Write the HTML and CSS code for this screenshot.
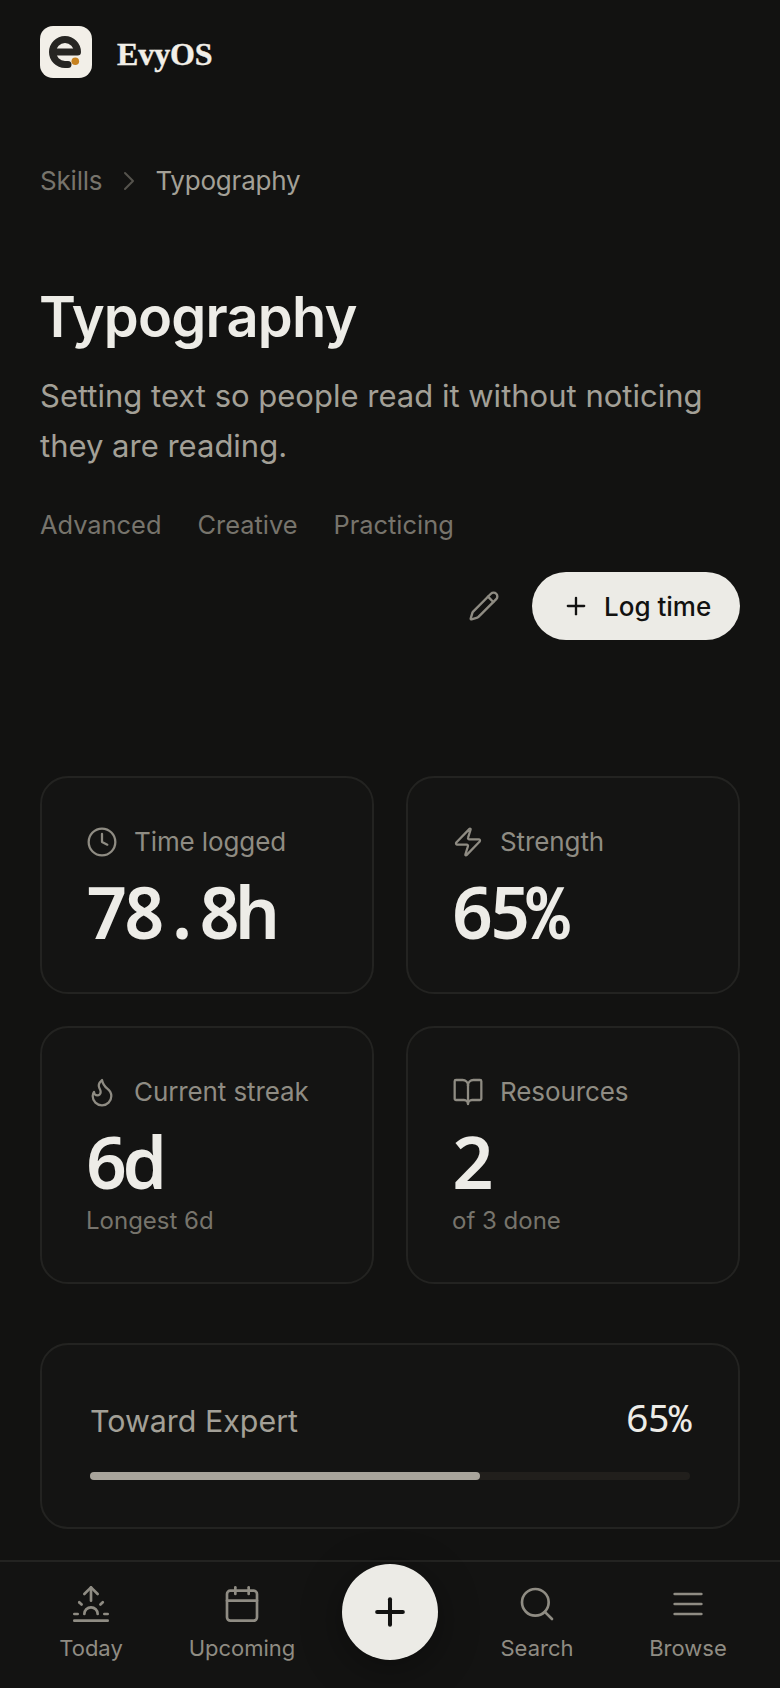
FILE: index.html
```html
<!DOCTYPE html>
<html lang="en">
<head>
    <meta charset="UTF-8">
    <meta name="viewport" content="width=device-width, initial-scale=1.0">
    <title>Typography - EvyOS</title>
    <link rel="stylesheet" href="styles.css">
</head>
<body>
    <div class="app">
        <main class="content">
            <header class="brand">
                <svg class="brand-logo" viewBox="0 0 52 52" aria-hidden="true">
                    <rect width="52" height="52" rx="13" fill="#f2efe8"/>
                    <path d="M12.500 26H37.500a12.500 12.500 0 1 0-12.500 12.500h3" fill="none" stroke="#262522" stroke-width="7" stroke-linecap="round"/>
                    <circle cx="35.300" cy="35.300" r="3.800" fill="#c7821f"/>
                </svg>
                <span class="brand-name">EvyOS</span>
            </header>

            <nav class="crumbs">
                <span class="crumb">Skills</span>
                <svg class="crumb-sep" viewBox="0 0 24 24"><path d="m9 18 6-6-6-6"/></svg>
                <span class="crumb-current">Typography</span>
            </nav>

            <h1 class="title">Typography</h1>
            <p class="subtitle">Setting text so people read it without noticing they are reading.</p>

            <div class="tags">
                <span>Advanced</span>
                <span>Creative</span>
                <span>Practicing</span>
            </div>

            <div class="actions">
                <button class="edit-btn" aria-label="Edit">
                    <svg viewBox="0 0 24 24"><path d="M21.174 6.812a1 1 0 0 0-3.986-3.987L3.842 16.174a2 2 0 0 0-.5.83l-1.321 4.352a.5.5 0 0 0 .623.622l4.353-1.32a2 2 0 0 0 .83-.497z"/><path d="m15 5 4 4"/></svg>
                </button>
                <button class="log-btn">
                    <svg viewBox="0 0 24 24"><path d="M5 12h14"/><path d="M12 5v14"/></svg>
                    Log time
                </button>
            </div>

            <section class="stats">
                <div class="stat">
                    <div class="stat-label">
                        <svg viewBox="0 0 24 24"><circle cx="12" cy="12" r="10"/><path d="M12 6v6l4 2"/></svg>
                        Time logged
                    </div>
                    <div class="stat-value">78.8h</div>
                </div>
                <div class="stat">
                    <div class="stat-label">
                        <svg viewBox="0 0 24 24"><path d="M4 14a1 1 0 0 1-.78-1.630l9.900-10.200a.5.5 0 0 1 .86.460l-1.920 6.020A1 1 0 0 0 13 10h7a1 1 0 0 1 .78 1.630l-9.900 10.200a.5.5 0 0 1-.86-.460l1.920-6.020A1 1 0 0 0 11 14z"/></svg>
                        Strength
                    </div>
                    <div class="stat-value">65%</div>
                </div>
                <div class="stat">
                    <div class="stat-label">
                        <svg viewBox="0 0 24 24"><path d="M8.500 14.500A2.500 2.500 0 0 0 11 12c0-1.380-.5-2-1-3-1.072-2.143-.224-4.054 2-6 .5 2.500 2 4.900 4 6.500 2 1.600 3 3.500 3 5.500a7 7 0 1 1-14 0c0-1.153.433-2.294 1-3a2.500 2.500 0 0 0 2.500 2.500z"/></svg>
                        Current streak
                    </div>
                    <div class="stat-value">6d</div>
                    <div class="stat-sub">Longest 6d</div>
                </div>
                <div class="stat">
                    <div class="stat-label">
                        <svg viewBox="0 0 24 24"><path d="M12 7v14"/><path d="M3 18a1 1 0 0 1-1-1V4a1 1 0 0 1 1-1h5a4 4 0 0 1 4 4 4 4 0 0 1 4-4h5a1 1 0 0 1 1 1v13a1 1 0 0 1-1 1h-6a3 3 0 0 0-3 3 3 3 0 0 0-3-3z"/></svg>
                        Resources
                    </div>
                    <div class="stat-value">2</div>
                    <div class="stat-sub">of 3 done</div>
                </div>
            </section>

            <section class="progress-card">
                <div class="progress-head">
                    <span class="progress-title">Toward Expert</span>
                    <span class="progress-value">65%</span>
                </div>
                <div class="progress-track">
                    <div class="progress-fill" style="width: 65%"></div>
                </div>
            </section>
        </main>

        <nav class="tabbar">
            <a class="tab">
                <svg viewBox="0 0 24 24"><path d="M12 2v8"/><path d="m4.930 10.930 1.410 1.410"/><path d="M2 18h2"/><path d="M20 18h2"/><path d="m19.070 10.930-1.410 1.410"/><path d="M22 22H2"/><path d="m8 6 4-4 4 4"/><path d="M16 18a4 4 0 0 0-8 0"/></svg>
                Today
            </a>
            <a class="tab">
                <svg viewBox="0 0 24 24"><path d="M8 2v4"/><path d="M16 2v4"/><rect x="3" y="4" width="18" height="18" rx="2"/><path d="M3 10h18"/></svg>
                Upcoming
            </a>
            <button class="fab" aria-label="Add">
                <svg viewBox="0 0 24 24"><path d="M5 12h14"/><path d="M12 5v14"/></svg>
            </button>
            <a class="tab">
                <svg viewBox="0 0 24 24"><circle cx="11" cy="11" r="8"/><path d="m21 21-4.300-4.300"/></svg>
                Search
            </a>
            <a class="tab">
                <svg viewBox="0 0 24 24"><path d="M4 12h16"/><path d="M4 6h16"/><path d="M4 18h16"/></svg>
                Browse
            </a>
        </nav>
    </div>
</body>
</html>
```

FILE: styles.css
```css
* {
    box-sizing: border-box;
}
html, body {
    margin: 0;
    height: 100%;
}
body {
    background-color: #121211;
    color: #edece7;
    font-family: Inter, "Noto Sans", sans-serif;
}
svg {
    fill: none;
    stroke: currentColor;
    stroke-width: 1.5;
    stroke-linecap: round;
    stroke-linejoin: round;
    flex-shrink: 0;
}
button {
    font-family: inherit;
    border: none;
    cursor: pointer;
}
.app {
    height: 1688px;
    display: flex;
    flex-direction: column;
    overflow: hidden;
}
.content {
    flex: 1;
    min-height: 0;
    padding: 26px 40px 0;
}

/* header */
.brand {
    display: flex;
    align-items: center;
    gap: 25px;
}
.brand-logo {
    width: 52px;
    height: 52px;
    stroke: none;
}
.brand-name {
    padding-top: 4px;
    font-family: "Liberation Serif", serif;
    font-weight: 700;
    font-size: 32px;
    letter-spacing: -0.1px;
    color: #f2efe8;
    -webkit-text-stroke: 0.4px #f2efe8;
}
.crumbs {
    display: flex;
    align-items: center;
    gap: 10.500px;
    margin-top: 84px;
    font-size: 26px;
    line-height: 38px;
    letter-spacing: -0.2px;
}
.crumb {
    color: #77746c;
}
.crumb-current {
    color: #a3a097;
}
.crumb-sep {
    width: 32px;
    height: 32px;
    color: #55534d;
}

/* title block */
.title {
    margin: 81px 0 0 -1px;
    font-size: 56px;
    line-height: 72px;
    font-weight: 600;
    letter-spacing: -0.8px;
    color: #edece7;
}
.subtitle {
    margin: 18px 0 0;
    font-size: 31px;
    line-height: 50px;
    color: #a3a097;
}
.tags {
    display: flex;
    gap: 36px;
    margin-top: 35px;
    font-size: 25.400px;
    line-height: 38px;
    color: #77746c;
}
.actions {
    display: flex;
    justify-content: flex-end;
    align-items: center;
    gap: 16px;
    margin-top: 28px;
}
.edit-btn {
    width: 64px;
    height: 68px;
    padding: 0;
    display: flex;
    align-items: center;
    justify-content: center;
    background: none;
    color: #8f8c83;
}
.edit-btn svg {
    width: 32px;
    height: 32px;
    stroke-width: 1.8;
}
.log-btn {
    height: 68px;
    width: 208px;
    padding: 0 0 0 30px;
    display: flex;
    align-items: center;
    gap: 14px;
    border-radius: 34px;
    background-color: #ecebe6;
    color: #121211;
    font-size: 26px;
    font-weight: 500;
    white-space: nowrap;
}
.log-btn svg {
    width: 28px;
    height: 28px;
    stroke-width: 2;
}

/* stat cards */
.stats {
    display: grid;
    grid-template-columns: 1fr 1fr;
    gap: 32px;
    margin-top: 136px;
}
.stat {
    border: 2px solid #232321;
    border-radius: 28px;
    padding: 44px 44px 43px;
    background-color: #141413;
}
.stat-label {
    display: flex;
    align-items: center;
    gap: 16px;
    font-size: 26px;
    line-height: 40px;
    letter-spacing: -0.1px;
    color: #8f8c83;
}
.stat-label svg {
    width: 32px;
    height: 32px;
    stroke-width: 1.7;
}
.stat-value {
    margin: 13px 0 2px -1px;
    font-family: "Noto Sans Mono", "DejaVu Sans Mono", monospace;
    font-weight: 600;
    font-size: 72px;
    line-height: 72px;
    letter-spacing: -5.500px;
    color: #edece7;
}
.stat-sub {
    margin-top: 6px;
    font-size: 24px;
    line-height: 36px;
    color: #77746c;
}

/* progress */
.progress-card {
    margin-top: 59px;
    height: 186px;
    border: 2px solid #232321;
    border-radius: 28px;
    padding: 47px 48px 0;
    background-color: #141413;
}
.progress-head {
    display: flex;
    justify-content: space-between;
    align-items: baseline;
    line-height: 50px;
}
.progress-title {
    font-size: 30.400px;
    color: #a3a097;
}
.progress-value {
    font-family: "Noto Sans Mono", "DejaVu Sans Mono", monospace;
    font-size: 38px;
    letter-spacing: -1.500px;
    color: #edece7;
}
.progress-track {
    margin-top: 26px;
    height: 8px;
    border-radius: 4px;
    background-color: #211f1c;
}
.progress-fill {
    height: 100%;
    border-radius: 4px;
    background-color: #a8a49b;
}

/* bottom nav */
.tabbar {
    height: 128px;
    flex-shrink: 0;
    display: grid;
    grid-template-columns: 150px 152px 1fr 150px 152px;
    padding: 0 16px;
    border-top: 2px solid #232321;
    background-color: #131312;
}
.tab {
    display: flex;
    flex-direction: column;
    align-items: center;
    gap: 8px;
    padding-top: 22px;
    font-size: 22px;
    line-height: 32px;
    color: #8f8c83;
}
.tab svg {
    width: 40px;
    height: 40px;
    stroke-width: 1.6;
}
.fab {
    justify-self: center;
    width: 96px;
    height: 96px;
    margin-top: 2px;
    padding: 0;
    display: flex;
    align-items: center;
    justify-content: center;
    border-radius: 50%;
    background-color: #ecebe6;
    color: #121211;
    box-shadow: 0 8px 40px rgba(0, 0, 0, 0.35);
}
.fab svg {
    width: 44px;
    height: 44px;
    stroke-width: 2.200;
}
```
